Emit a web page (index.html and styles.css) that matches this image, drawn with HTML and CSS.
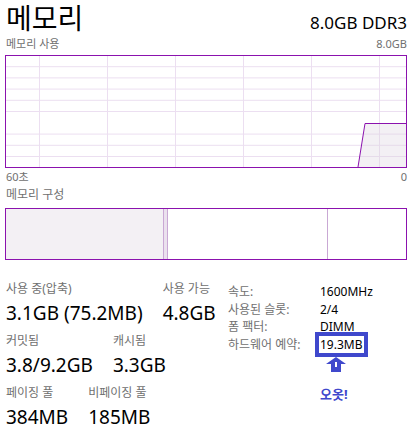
FILE: index.html
```html
<!DOCTYPE html>
<html lang="ko">
<head>
  <meta charset="UTF-8">
  <title>메모리</title>
  <link rel="stylesheet" href="styles.css">
</head>
<body>

  <div class="header">
    <h1 class="title">메모리</h1>
    <span class="spec">8.0GB DDR3</span>
  </div>

  <div class="caption">
    <span>메모리 사용</span>
    <span>8.0GB</span>
  </div>
  <svg class="graph" width="402" height="113" viewBox="0 0 402 113">
    <g stroke="#ecdff1" stroke-width="1">
      <line x1="34.5" y1="0" x2="34.5" y2="113"/>
      <line x1="102.5" y1="0" x2="102.5" y2="113"/>
      <line x1="170.5" y1="0" x2="170.5" y2="113"/>
      <line x1="238.5" y1="0" x2="238.5" y2="113"/>
      <line x1="306.5" y1="0" x2="306.5" y2="113"/>
      <line x1="374.5" y1="0" x2="374.5" y2="113"/>
      <line x1="0" y1="11.7" x2="402" y2="11.7"/>
      <line x1="0" y1="22.9" x2="402" y2="22.9"/>
      <line x1="0" y1="34.1" x2="402" y2="34.1"/>
      <line x1="0" y1="45.3" x2="402" y2="45.3"/>
      <line x1="0" y1="56.5" x2="402" y2="56.5"/>
      <line x1="0" y1="79.1" x2="402" y2="79.1"/>
      <line x1="0" y1="90.3" x2="402" y2="90.3"/>
      <line x1="0" y1="101.5" x2="402" y2="101.5"/>
    </g>
    <polygon points="353,112 360,68.5 401,68.5 401,112" fill="#f3f0f4"/>
    <g stroke="#e6dbea" stroke-width="1">
      <line x1="374.5" y1="69" x2="374.5" y2="112"/>
      <line x1="359" y1="79.1" x2="401" y2="79.1"/>
      <line x1="357" y1="90.3" x2="401" y2="90.3"/>
      <line x1="355" y1="101.5" x2="401" y2="101.5"/>
    </g>
    <polyline points="353,112 360,68.5 401,68.5" fill="none" stroke="#8b12ae" stroke-width="1"/>
    <rect x="0.5" y="0.5" width="401" height="112" fill="none" stroke="#8b12ae" stroke-width="1"/>
  </svg>
  <div class="caption axis">
    <span>60초</span>
    <span>0</span>
  </div>

  <div class="caption section">
    <span>메모리 구성</span>
  </div>
  <div class="composition">
    <div class="part in-use"></div>
    <div class="part modified"></div>
    <div class="part standby"></div>
    <div class="part free"></div>
  </div>

  <div class="details">
    <div class="stats">
      <div class="stat-row">
        <div class="stat">
          <div class="label">사용 중(압축)</div>
          <div class="value">3.1GB (75.2MB)</div>
        </div>
        <div class="stat">
          <div class="label">사용 가능</div>
          <div class="value">4.8GB</div>
        </div>
      </div>
      <div class="stat-row">
        <div class="stat">
          <div class="label">커밋됨</div>
          <div class="value">3.8/9.2GB</div>
        </div>
        <div class="stat">
          <div class="label">캐시됨</div>
          <div class="value">3.3GB</div>
        </div>
      </div>
      <div class="stat-row">
        <div class="stat">
          <div class="label">페이징 풀</div>
          <div class="value">384MB</div>
        </div>
        <div class="stat">
          <div class="label">비페이징 풀</div>
          <div class="value">185MB</div>
        </div>
      </div>
    </div>

    <div class="props">
      <span class="prop-label">속도:</span>
      <span class="prop-value">1600MHz</span>
      <span class="prop-label">사용된 슬롯:</span>
      <span class="prop-value">2/4</span>
      <span class="prop-label">폼 팩터:</span>
      <span class="prop-value">DIMM</span>
      <span class="prop-label">하드웨어 예약:</span>
      <span class="prop-value"><span class="highlight">19.3MB</span></span>
      <span></span>
      <span class="note">
        <svg class="arrow" width="20" height="15" viewBox="0 0 20 15">
          <polygon points="10,0 20,7 15,7 15,15 5,15 5,7 0,7" fill="#3f48cc"/>
          <rect x="9" y="5" width="2" height="5" fill="#ffffff"/>
        </svg>
        <span class="wow">오옷!</span>
      </span>
    </div>
  </div>

</body>
</html>
```

FILE: styles.css
```css
body {
  margin: 0;
  padding: 0 11px 0 5px;
  font-family: "Noto Sans", "Noto Sans CJK KR", sans-serif;
  color: #000;
  background: #fff;
}

.header {
  display: flex;
  justify-content: space-between;
  align-items: baseline;
  height: 36px;
  padding-left: 1px;
}

.title {
  margin: 0;
  font-size: 28px;
  font-weight: normal;
  line-height: 36px;
}

.spec {
  font-size: 17px;
  line-height: 20px;
}

.caption {
  display: flex;
  justify-content: space-between;
  font-size: 11px;
  line-height: 16px;
  color: #707070;
  padding-left: 1px;
}

.graph {
  display: block;
  margin-top: 3px;
}

.axis {
  margin-top: 1px;
}

.section {
  margin-top: 1px;
  font-size: 12px;
  line-height: 18px;
}

.composition {
  display: flex;
  margin-top: 4px;
  height: 50px;
  border: 1px solid #8b12ae;
}

.part {
  border-right: 1px solid #c9a8d4;
}

.in-use {
  width: 157px;
  background: #f3f0f4;
}

.modified {
  width: 3px;
  background: #ebe1ee;
}

.standby {
  width: 159px;
}

.free {
  flex: 1;
  border-right: none;
}

.details {
  display: flex;
  margin-top: 20px;
  padding-left: 1px;
}

.stats {
  width: 222px;
}

.stat-row {
  display: flex;
  gap: 20px;
  margin-bottom: 6px;
}

.label {
  font-size: 12px;
  line-height: 17px;
  color: #707070;
}

.value {
  margin-top: 3px;
  font-size: 19px;
  line-height: 26px;
}

.props {
  display: grid;
  grid-template-columns: 92px auto;
  align-content: start;
  font-size: 12px;
  line-height: 17.5px;
  margin-top: 3px;
}

.prop-label {
  color: #707070;
}

.highlight {
  display: inline-block;
  margin: -4px 0 -4px -5px;
  padding: 0 1px;
  border: 4px solid #3f48cc;
  line-height: 17px;
  vertical-align: top;
}

.note {
  display: flex;
  flex-direction: column;
  align-items: flex-start;
}

.arrow {
  display: block;
  margin: 4px 0 0 6px;
}

.wow {
  margin-top: 14px;
  font-size: 13px;
  font-weight: bold;
  color: #3f48cc;
}
```
